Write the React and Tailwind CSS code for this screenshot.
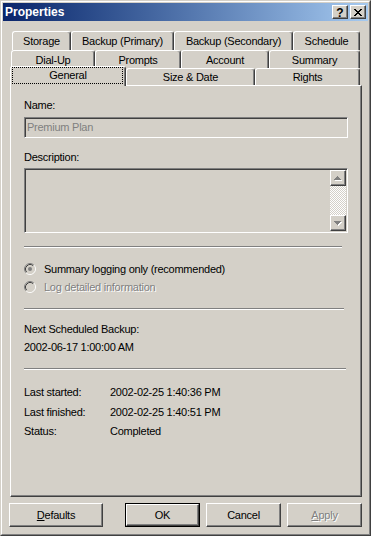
import React from "react";

const raised =
  "border border-t-white border-l-white border-r-[#404040] border-b-[#404040] shadow-[inset_-1px_-1px_0_#808080]";
const sunken =
  "border border-t-[#808080] border-l-[#808080] border-r-white border-b-white shadow-[inset_1px_1px_0_#404040,inset_-1px_-1px_0_#d4d0c8]";
const disabledText = "text-[#808080] [text-shadow:1px_1px_0_#ffffff]";

function TitleBtn({ children }) {
  return (
    <div className={`w-[16px] h-[14px] bg-[#d4d0c8] flex items-center justify-center ${raised}`}>
      {children}
    </div>
  );
}

function Tab({ w, children, h = "h-full" }) {
  return (
    <div
      className={`${w} ${h} shrink-0 flex items-center justify-center pt-[1px] bg-[#d4d0c8] border-t border-l border-r border-t-white border-l-white border-r-[#404040] rounded-tl-[3px] rounded-tr-[3px] shadow-[inset_-1px_0_0_#808080] whitespace-nowrap`}
    >
      {children}
    </div>
  );
}

function Sep({ w, mt }) {
  return (
    <div className={`${w} ${mt} h-[2px] shrink-0 border-t border-t-[#808080] border-b border-b-white`} />
  );
}

function Radio({ checked }) {
  return (
    <svg width="12" height="12" viewBox="0 0 12 12" className="shrink-0">
      <circle cx="6" cy="6" r="4.5" fill="#d4d0c8" />
      <path d="M2.11 9.89 A5.5 5.5 0 0 1 9.89 2.11" fill="none" stroke="#808080" strokeWidth="1" />
      <path d="M9.89 2.11 A5.5 5.5 0 0 1 2.11 9.89" fill="none" stroke="#ffffff" strokeWidth="1" />
      <path d="M2.82 9.18 A4.5 4.5 0 0 1 9.18 2.82" fill="none" stroke="#404040" strokeWidth="1" />
      <path d="M9.18 2.82 A4.5 4.5 0 0 1 2.82 9.18" fill="none" stroke="#d4d0c8" strokeWidth="1" />
      {checked && <circle cx="6" cy="6" r="2" fill="#808080" />}
    </svg>
  );
}

function Arrow({ down }) {
  const d = down
    ? "M0 0h7v1H0z M1 1h5v1H1z M2 2h3v1H2z M3 3h1v1H3z"
    : "M3 0h1v1H3z M2 1h3v1H2z M1 2h5v1H1z M0 3h7v1H0z";
  return (
    <svg width="8" height="5" viewBox="0 0 8 5" shapeRendering="crispEdges">
      <path d={d} fill="#ffffff" transform="translate(1,1)" />
      <path d={d} fill="#808080" />
    </svg>
  );
}

function Btn({ w, children, isDefault }) {
  if (isDefault) {
    return (
      <div className={`${w} h-[24px] border border-black`}>
        <div className={`w-full h-full flex items-center justify-center ${raised}`}>{children}</div>
      </div>
    );
  }
  return (
    <div className={`${w} h-[24px] flex items-center justify-center ${raised}`}>{children}</div>
  );
}

export default function App() {
  return (
    <div className="w-[371px] h-[536px] bg-[#d4d0c8] border border-t-[#d4d0c8] border-l-[#d4d0c8] border-r-[#404040] border-b-[#404040] font-['Liberation_Sans',Arial,sans-serif] text-[11px] leading-[13px] tracking-[-0.25px] text-black select-none overflow-hidden">
      <div className="h-full border border-t-white border-l-white border-r-[#808080] border-b-[#808080] p-px flex flex-col">
        {/* Title bar */}
        <div className="h-[18px] shrink-0 flex items-center bg-linear-to-r from-[#0a246a] to-[#a6caf0] pl-[2px] pr-[2px]">
          <span className="flex-1 text-white font-bold text-[12px] leading-[14px] tracking-normal">Properties</span>
          <TitleBtn>
            <span className="font-bold text-[12px] leading-[12px] mt-[1px] tracking-normal">?</span>
          </TitleBtn>
          <div className="w-[2px]" />
          <TitleBtn>
            <svg width="8" height="7" viewBox="0 0 8 7" shapeRendering="crispEdges">
              <path
                d="M0 0h2v1H0z M6 0h2v1H6z M1 1h2v1H1z M5 1h2v1H5z M2 2h4v1H2z M3 3h2v1H3z M2 4h4v1H2z M1 5h2v1H1z M5 5h2v1H5z M0 6h2v1H0z M6 6h2v1H6z"
                fill="#000"
              />
            </svg>
          </TitleBtn>
        </div>

        {/* Tabs row 1 */}
        <div className="mt-[10px] ml-[9px] h-[19px] flex shrink-0">
          <Tab w="w-[59px]">Storage</Tab>
          <Tab w="w-[103px]">Backup (Primary)</Tab>
          <Tab w="w-[119px]">Backup (Secondary)</Tab>
          <Tab w="w-[67px]">Schedule</Tab>
        </div>
        {/* Tabs row 2 */}
        <div className="ml-[8px] h-[18px] flex shrink-0">
          <Tab w="w-[84px]">Dial-Up</Tab>
          <Tab w="w-[86px]">Prompts</Tab>
          <Tab w="w-[88px]">Account</Tab>
          <Tab w="w-[91px]">Summary</Tab>
        </div>
        {/* Tabs row 3 */}
        <div className="ml-[7px] h-[17px] flex items-end shrink-0">
          <div className="relative z-10 w-[116px] h-[20px] mb-[-1px] shrink-0 flex items-center justify-center pb-[3px] bg-[#d4d0c8] border-t border-l border-r border-t-white border-l-white border-r-[#404040] rounded-tl-[3px] rounded-tr-[3px] shadow-[inset_-1px_0_0_#808080]">
            <div className="absolute left-[1px] right-[2px] top-[0px] h-[17px] border border-dotted border-black" />
            General
          </div>
          <Tab w="w-[129px]">Size &amp; Date</Tab>
          <Tab w="w-[105px]">Rights</Tab>
        </div>

        {/* Panel */}
        <div className="ml-[7px] w-[352px] h-[412px] shrink-0 border border-t-white border-l-white border-r-[#404040] border-b-[#404040] shadow-[inset_-1px_-1px_0_#808080] flex flex-col pl-[13px]">
          <div className="mt-[13px] h-[13px]">Name:</div>
          <div className={`mt-[5px] w-[324px] h-[21px] shrink-0 flex items-center pl-[2px] text-[#808080] ${sunken}`}>
            Premium Plan
          </div>
          <div className="mt-[13px] h-[13px]">Description:</div>
          <div className={`mt-[4px] w-[324px] h-[65px] shrink-0 p-px flex justify-end ${sunken}`}>
            <div className="w-[16px] h-full flex flex-col">
              <div className={`h-[16px] shrink-0 flex items-center justify-center ${raised}`}>
                <Arrow />
              </div>
              <div className="flex-1 bg-[repeating-conic-gradient(#ffffff_0%_25%,#d4d0c8_0%_50%)] bg-[length:2px_2px]" />
              <div className={`h-[16px] shrink-0 flex items-center justify-center ${raised}`}>
                <Arrow down />
              </div>
            </div>
          </div>

          <Sep w="w-[318px]" mt="mt-[13px]" />

          <div className="mt-[13px] h-[16px] flex items-center">
            <Radio checked />
            <span className="ml-[8px]">Summary logging only (recommended)</span>
          </div>
          <div className="mt-[2px] h-[16px] flex items-center">
            <Radio />
            <span className={`ml-[8px] ${disabledText}`}>Log detailed information</span>
          </div>

          <Sep w="w-[320px]" mt="mt-[13px]" />

          <div className="mt-[13px] h-[13px]">Next Scheduled Backup:</div>
          <div className="mt-[5px] h-[13px]">2002-06-17 1:00:00 AM</div>

          <Sep w="w-[322px]" mt="mt-[14px]" />

          <div className="mt-[16px] h-[13px] flex">
            <span className="w-[86px] shrink-0">Last started:</span>
            <span>2002-02-25 1:40:36 PM</span>
          </div>
          <div className="mt-[7px] h-[13px] flex">
            <span className="w-[86px] shrink-0">Last finished:</span>
            <span>2002-02-25 1:40:51 PM</span>
          </div>
          <div className="mt-[6px] h-[13px] flex">
            <span className="w-[86px] shrink-0">Status:</span>
            <span>Completed</span>
          </div>
        </div>

        {/* Buttons */}
        <div className="mt-[6px] ml-[6px] flex shrink-0">
          <Btn w="w-[94px]">
            <span>
              <span className="underline">D</span>efaults
            </span>
          </Btn>
          <div className="w-[22px]" />
          <Btn w="w-[75px]" isDefault>
            OK
          </Btn>
          <div className="w-[6px]" />
          <Btn w="w-[75px]">Cancel</Btn>
          <div className="w-[6px]" />
          <Btn w="w-[75px]">
            <span className={disabledText}>
              <span className="underline">A</span>pply
            </span>
          </Btn>
        </div>
      </div>
    </div>
  );
}
